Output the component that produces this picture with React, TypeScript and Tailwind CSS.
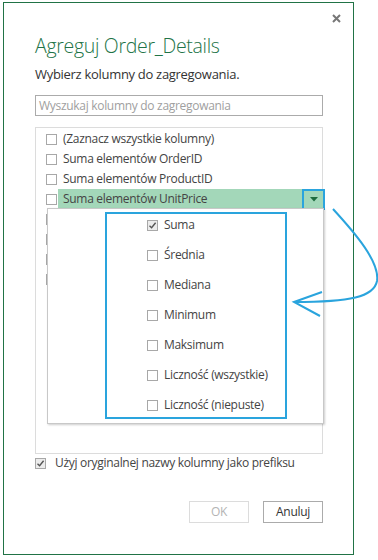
import React from "react";

const Box = ({ checked = false }: { checked?: boolean }) => (
  <span
    className={`flex h-[11px] w-[11px] shrink-0 items-center justify-center border border-[#a8a8a8] ${
      checked ? "bg-[#ececec]" : "bg-white"
    }`}
  >
    {checked && (
      <svg width="9" height="9" viewBox="0 0 9 9">
        <path d="M1.5 4.8 L3.6 6.8 L7.6 1.8" fill="none" stroke="#555" strokeWidth="1.4" />
      </svg>
    )}
  </span>
);

const columns = [
  "(Zaznacz wszystkie kolumny)",
  "Suma elementów OrderID",
  "Suma elementów ProductID",
];

const hidden = ["a", "b", "c", "d"];

const options = [
  { label: "Suma", checked: true },
  { label: "Średnia" },
  { label: "Mediana" },
  { label: "Minimum" },
  { label: "Maksimum" },
  { label: "Liczność (wszystkie)" },
  { label: "Liczność (niepuste)" },
];

const App = () => {
  return (
    <div
      className="relative h-[560px] w-[378px] overflow-hidden bg-white text-[#444]"
      style={{ fontFamily: '"Open Sans", "Noto Sans", sans-serif' }}
    >
      <div className="relative ml-[3px] mt-[2px] flex h-[553px] w-[351px] flex-col border border-[#217346] pl-[31px] pt-[30px] text-[12px] tracking-[-0.3px]">
        <button className="absolute right-[10px] top-[9px] p-[2px]">
          <svg width="9" height="9" viewBox="0 0 9 9">
            <path d="M1 1 L8 8 M8 1 L1 8" stroke="#777" strokeWidth="2" />
          </svg>
        </button>

        <h1 className="text-[19.5px] font-light leading-[26px] tracking-[-0.3px] text-[#217346]">
          Agreguj Order_Details
        </h1>
        <p className="mt-[6px] text-[13px] leading-[18px] tracking-[-0.3px] text-[#333]">
          Wybierz kolumny do zagregowania.
        </p>

        <div className="mt-[12px] flex h-[21px] w-[288px] items-center border border-[#ababab] px-[3px] text-[#a0a0a0]">
          Wyszukaj kolumny do zagregowania
        </div>

        <div className="relative mt-[11px] h-[327px] w-[288px] border border-[#dcdcdc] pt-[1px]">
          {columns.map((c) => (
            <div key={c} className="flex h-[20px] items-center pl-[10px]">
              <Box />
              <span className="ml-[6px]">{c}</span>
            </div>
          ))}
          <div className="mr-[-3px] flex h-[20px] items-center pl-[10px]">
            <Box />
            <div className="ml-[1px] flex h-[20px] flex-1 items-center bg-[#a3d7b9] pl-[5px]">
              Suma elementów UnitPrice
            </div>
            <div className="flex h-[21px] w-[23px] items-center justify-center border-2 border-[#2aa4dd] bg-[#a3d7b9]">
              <svg width="8" height="5" viewBox="0 0 8 5">
                <path d="M0 0 L8 0 L4 4.5 Z" fill="#1d6b3f" />
              </svg>
            </div>
          </div>
          {hidden.map((h) => (
            <div key={h} className="flex h-[20px] items-center pl-[10px]">
              <Box />
            </div>
          ))}

          <div className="absolute left-[11px] top-[80px] h-[216px] w-[277px] border border-[#c8c8c8] bg-white pb-[4px] pt-[1px] shadow-[1px_1px_2px_rgba(0,0,0,0.2)]">
            {options.map((o) => (
              <div key={o.label} className="flex h-[30px] items-center pl-[99px]">
                <Box checked={o.checked} />
                <span className="ml-[6px]">{o.label}</span>
              </div>
            ))}
            <div className="pointer-events-none absolute left-[57px] top-[3px] h-[207px] w-[182px] border-2 border-[#2aa4dd]" />
          </div>
        </div>

        <div className="-mt-[1px] flex h-[20px] items-center">
          <Box checked />
          <span className="ml-[9px]">Użyj oryginalnej nazwy kolumny jako prefiksu</span>
        </div>

        <div className="mt-[28px] flex w-[288px] justify-end gap-[14px]">
          <button className="h-[22px] w-[60px] border border-[#dcdcdc] text-[#b4b4b4]">OK</button>
          <button className="h-[22px] w-[60px] border border-[#ababab] text-[#333]">Anuluj</button>
        </div>
      </div>

      <svg className="pointer-events-none absolute left-0 top-0" width="378" height="560">
        <path
          d="M333 209 C355 233 380 262 377 281 C374 297 350 302 294 302"
          fill="none"
          stroke="#2aa4dd"
          strokeWidth="2"
        />
        <path d="M322 292 L294 302 L320 316" fill="none" stroke="#2aa4dd" strokeWidth="2" />
      </svg>
    </div>
  );
};

export default App;
